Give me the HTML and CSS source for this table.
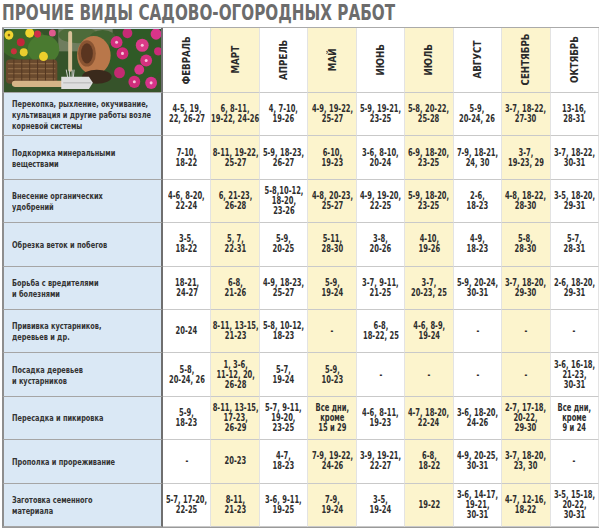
FILE: index.html
```html
<!DOCTYPE html>
<html lang="ru">
<head>
<meta charset="utf-8">
<title>Прочие виды садово-огородных работ</title>
<link rel="stylesheet" href="styles.css">
</head>
<body>
<h1 class="title"><span>ПРОЧИЕ ВИДЫ САДОВО-ОГОРОДНЫХ РАБОТ</span></h1>
<div class="grid">
  <div class="pic">
    <svg viewBox="0 0 159 62" preserveAspectRatio="none" width="100%" height="100%">
      <rect width="159" height="62" fill="#36532a"/>
      <rect x="55" y="0" width="55" height="22" fill="#6f7d5e"/>
      <ellipse cx="75" cy="6" rx="20" ry="8" fill="#4e6b3a"/>
      <ellipse cx="100" cy="10" rx="14" ry="9" fill="#3f6230"/>
      <ellipse cx="20" cy="14" rx="24" ry="16" fill="#3e6a2a"/>
      <ellipse cx="40" cy="20" rx="16" ry="14" fill="#4a7a30"/>
      <ellipse cx="135" cy="25" rx="30" ry="28" fill="#2f5a26"/>
      <rect x="2" y="30" width="52" height="24" rx="4" fill="#6a4a2e"/>
      <path d="M4 34h48M4 39h48M4 44h48M4 49h48" stroke="#8c6844" stroke-width="1.2"/>
      <path d="M10 30v24M18 30v24M26 30v24M34 30v24M42 30v24M50 30v24" stroke="#543823" stroke-width="1"/>
      <circle cx="5" cy="6" r="4.5" fill="#f1d431"/>
      <circle cx="5" cy="6" r="1.3" fill="#8a6a10"/>
      <circle cx="26" cy="4" r="4.5" fill="#f3d62e"/>
      <circle cx="40" cy="27" r="4.5" fill="#ecd02c"/>
      <circle cx="20" cy="23" r="4" fill="#e9cd2e"/>
      <circle cx="17" cy="13" r="4" fill="#c3263a"/>
      <circle cx="34" cy="5" r="3.5" fill="#d02e48"/>
      <circle cx="49" cy="4" r="3.5" fill="#e05a8e"/>
      <circle cx="10" cy="22" r="3" fill="#c9303e"/>
      <rect x="65" y="2" width="4" height="40" rx="2" fill="#d9c29a"/>
      <path d="M63 40l2 10M66 40l1 10M69 40v10M71 40l-1 10" stroke="#cfcfcf" stroke-width="1"/>
      <ellipse cx="91" cy="26" rx="17" ry="19" fill="#b9774a"/>
      <ellipse cx="84" cy="24" rx="9" ry="13" fill="#8a5432"/>
      <ellipse cx="84" cy="24" rx="6" ry="10" fill="#5a3520"/>
      <ellipse cx="94" cy="47" rx="15" ry="7" fill="#3a2a1c"/>
      <rect x="8" y="51" width="54" height="6" rx="3" fill="#d5b487"/>
      <path d="M58 47h28l4 6-4 6h-28z" fill="#dedede"/>
      <path d="M60 53h28" stroke="#a9a9a9" stroke-width="0.8"/>
      <circle cx="114" cy="13" r="6" fill="#d42f7f"/>
      <circle cx="120" cy="24" r="6" fill="#cf2a78"/>
      <circle cx="140" cy="16" r="6.5" fill="#db3a88"/>
      <circle cx="154" cy="5" r="5.5" fill="#d8348a"/>
      <circle cx="125" cy="4" r="5" fill="#c82b75"/>
      <circle cx="144" cy="31" r="6" fill="#d3317f"/>
      <circle cx="117" cy="43" r="5.5" fill="#c42a72"/>
      <circle cx="137" cy="40" r="5" fill="#d9368a"/>
      <circle cx="132" cy="52" r="6" fill="#cf2d7b"/>
      <circle cx="149" cy="53" r="6" fill="#d6338a"/>
      <circle cx="156" cy="22" r="4" fill="#c92b78"/>
      <circle cx="114" cy="13" r="1.5" fill="#f5c7dc"/>
      <circle cx="120" cy="24" r="1.5" fill="#f5c7dc"/>
      <circle cx="140" cy="16" r="1.5" fill="#f5c7dc"/>
      <circle cx="144" cy="31" r="1.5" fill="#f5c7dc"/>
      <circle cx="132" cy="52" r="1.5" fill="#f5c7dc"/>
      <circle cx="149" cy="53" r="1.5" fill="#f5c7dc"/>
    </svg>
  </div>
  <div class="m"><span>ФЕВРАЛЬ</span></div>
  <div class="m y"><span>МАРТ</span></div>
  <div class="m"><span>АПРЕЛЬ</span></div>
  <div class="m y"><span>МАЙ</span></div>
  <div class="m"><span>ИЮНЬ</span></div>
  <div class="m y"><span>ИЮЛЬ</span></div>
  <div class="m"><span>АВГУСТ</span></div>
  <div class="m y"><span>СЕНТЯБРЬ</span></div>
  <div class="m"><span>ОКТЯБРЬ</span></div>

  <div class="lab"><span>Перекопка, рыхление, окучивание,<br>культивация и другие работы возле<br>корневой системы</span></div>
  <div class="c"><span>4-5, 19,<br>22, 26-27</span></div>
  <div class="c y"><span>6, 8-11,<br>19-22, 24-26</span></div>
  <div class="c"><span>4, 7-10,<br>19-26</span></div>
  <div class="c y"><span>4-9, 19-22,<br>25-27</span></div>
  <div class="c"><span>5-9, 19-21,<br>23-25</span></div>
  <div class="c y"><span>5-8, 20-22,<br>25-28</span></div>
  <div class="c"><span>5-9,<br>20-24, 26</span></div>
  <div class="c y"><span>3-7, 18-22,<br>27-30</span></div>
  <div class="c"><span>13-16,<br>28-31</span></div>

  <div class="lab"><span>Подкормка минеральными<br>веществами</span></div>
  <div class="c"><span>7-10,<br>18-22</span></div>
  <div class="c y"><span>8-11, 19-22,<br>25-27</span></div>
  <div class="c"><span>5-9, 18-23,<br>26-27</span></div>
  <div class="c y"><span>6-10,<br>19-23</span></div>
  <div class="c"><span>3-6, 8-10,<br>20-24</span></div>
  <div class="c y"><span>6-9, 18-20,<br>23-25</span></div>
  <div class="c"><span>7-9, 18-21,<br>24, 30</span></div>
  <div class="c y"><span>3-7,<br>19-23, 29</span></div>
  <div class="c"><span>3-7, 18-22,<br>30-31</span></div>

  <div class="lab"><span>Внесение органических<br>удобрений</span></div>
  <div class="c"><span>4-6, 8-20,<br>22-24</span></div>
  <div class="c y"><span>6, 21-23,<br>26-28</span></div>
  <div class="c"><span>5-8,10-12,<br>18-20,<br>23-26</span></div>
  <div class="c y"><span>4-8, 20-23,<br>25-27</span></div>
  <div class="c"><span>4-9, 19-20,<br>22-25</span></div>
  <div class="c y"><span>5-9, 18-20,<br>23-25</span></div>
  <div class="c"><span>2-6,<br>18-23</span></div>
  <div class="c y"><span>4-8, 18-22,<br>28-30</span></div>
  <div class="c"><span>3-5, 18-20,<br>29-31</span></div>

  <div class="lab"><span>Обрезка веток и побегов</span></div>
  <div class="c"><span>3-5,<br>18-22</span></div>
  <div class="c y"><span>5, 7,<br>22-31</span></div>
  <div class="c"><span>5-9,<br>20-25</span></div>
  <div class="c y"><span>5-11,<br>28-30</span></div>
  <div class="c"><span>3-8,<br>20-26</span></div>
  <div class="c y"><span>4-10,<br>19-26</span></div>
  <div class="c"><span>4-9,<br>18-23</span></div>
  <div class="c y"><span>5-8,<br>28-30</span></div>
  <div class="c"><span>5-7,<br>28-31</span></div>

  <div class="lab"><span>Борьба с вредителями<br>и болезнями</span></div>
  <div class="c"><span>18-21,<br>24-27</span></div>
  <div class="c y"><span>6-8,<br>21-26</span></div>
  <div class="c"><span>4-9, 18-23,<br>25-27</span></div>
  <div class="c y"><span>5-9,<br>19-24</span></div>
  <div class="c"><span>3-7, 9-11,<br>21-25</span></div>
  <div class="c y"><span>3-7,<br>20-23, 25</span></div>
  <div class="c"><span>5-9, 20-24,<br>30-31</span></div>
  <div class="c y"><span>3-7, 18-20,<br>29-30</span></div>
  <div class="c"><span>2-6, 18-20,<br>29-31</span></div>

  <div class="lab"><span>Прививка кустарников,<br>деревьев и др.</span></div>
  <div class="c"><span>20-24</span></div>
  <div class="c y"><span>8-11, 13-15,<br>21-23</span></div>
  <div class="c"><span>5-8, 10-12,<br>18-23</span></div>
  <div class="c y"><span>-</span></div>
  <div class="c"><span>6-8,<br>18-22, 25</span></div>
  <div class="c y"><span>4-6, 8-9,<br>19-24</span></div>
  <div class="c"><span>-</span></div>
  <div class="c y"><span>-</span></div>
  <div class="c"><span>-</span></div>

  <div class="lab"><span>Посадка деревьев<br>и кустарников</span></div>
  <div class="c"><span>5-8,<br>20-24, 26</span></div>
  <div class="c y"><span>1, 3-6,<br>11-12, 20,<br>26-28</span></div>
  <div class="c"><span>5-7,<br>19-24</span></div>
  <div class="c y"><span>5-9,<br>10-23</span></div>
  <div class="c"><span>-</span></div>
  <div class="c y"><span>-</span></div>
  <div class="c"><span>-</span></div>
  <div class="c y"><span>-</span></div>
  <div class="c"><span>3-6, 16-18,<br>21-23,<br>30-31</span></div>

  <div class="lab"><span>Пересадка и пикировка</span></div>
  <div class="c"><span>5-9,<br>18-23</span></div>
  <div class="c y"><span>8-11, 13-15,<br>17-23,<br>26-29</span></div>
  <div class="c"><span>5-7, 9-11,<br>19-20,<br>23-25</span></div>
  <div class="c y"><span>Все дни,<br>кроме<br>15 и 29</span></div>
  <div class="c"><span>4-6, 8-11,<br>19-23</span></div>
  <div class="c y"><span>4-7, 18-20,<br>22-24</span></div>
  <div class="c"><span>3-6, 18-20,<br>24-26</span></div>
  <div class="c y"><span>2-7, 17-18,<br>20-22,<br>29-30</span></div>
  <div class="c"><span>Все дни,<br>кроме<br>9 и 24</span></div>

  <div class="lab"><span>Прополка и прореживание</span></div>
  <div class="c"><span>-</span></div>
  <div class="c y"><span>20-23</span></div>
  <div class="c"><span>4-7,<br>18-23</span></div>
  <div class="c y"><span>7-9, 19-22,<br>24-26</span></div>
  <div class="c"><span>3-9, 19-21,<br>22-27</span></div>
  <div class="c y"><span>6-8,<br>18-22</span></div>
  <div class="c"><span>4-9, 20-25,<br>30-31</span></div>
  <div class="c y"><span>3-7, 18-20,<br>23, 30</span></div>
  <div class="c"><span>-</span></div>

  <div class="lab"><span>Заготовка семенного<br>материала</span></div>
  <div class="c"><span>5-7, 17-20,<br>22-25</span></div>
  <div class="c y"><span>8-11,<br>21-23</span></div>
  <div class="c"><span>3-6, 9-11,<br>19-25</span></div>
  <div class="c y"><span>7-9,<br>19-24</span></div>
  <div class="c"><span>3-5,<br>19-24</span></div>
  <div class="c y"><span>19-22</span></div>
  <div class="c"><span>3-6, 14-17,<br>19-21,<br>30-31</span></div>
  <div class="c y"><span>4-7, 12-16,<br>18-22</span></div>
  <div class="c"><span>3-5, 15-18,<br>20-22,<br>30-31</span></div>
</div>
</body>
</html>
```
FILE: styles.css
```css
* { box-sizing: border-box; }
html, body { margin: 0; padding: 0; background: #ffffff; }
body {
  font-family: "DejaVu Sans Condensed", "DejaVu Sans", sans-serif;
  color: #2e2e2e;
  width: 600px;
  overflow: hidden;
}
.title {
  margin: 0;
  height: 27px;
  padding: 2px 0 0 2px;
  font-size: 21px;
  line-height: 22px;
  font-weight: 700;
  color: #6c6c6c;
  white-space: nowrap;
}
.title span {
  display: inline-block;
  transform: scaleX(0.805);
  transform-origin: left center;
}
.grid {
  display: grid;
  grid-template-columns: 161px repeat(9, minmax(0, 1fr));
  grid-template-rows: 65px repeat(10, 43.4px);
  width: 597px;
  margin-left: 2px;
  border-top: 1px solid #aaaaaa;
  border-bottom: 1px solid #9a9a9a;
}
.pic {
  border-left: 2px solid #8e8e8e;
  border-right: 2px solid #6f6f6f;
  border-bottom: 1px solid #a5a5a5;
  padding: 1px 0 0 0;
  background: #dae8f5;
}
.pic svg { display: block; }
.m {
  display: flex;
  align-items: center;
  justify-content: center;
  border-right: 1px solid #e3e3e3;
  border-bottom: 1px solid #c9c9c9;
  min-width: 0;
}
.m span {
  writing-mode: vertical-rl;
  transform: rotate(180deg) scale(1, 0.88);
  font-size: 11px;
  font-weight: 700;
  color: #2a2a2a;
  white-space: nowrap;
}
.lab {
  display: flex;
  align-items: center;
  padding-left: 8px;
  background: #dae8f5;
  border-left: 2px solid #8e8e8e;
  border-right: 2px solid #6f6f6f;
  border-bottom: 1px solid #a5a5a5;
  font-size: 9.5px;
  line-height: 11px;
  font-weight: 700;
  color: #333333;
  white-space: nowrap;
  min-width: 0;
}
.lab span {
  display: inline-block;
  transform: scaleX(0.77);
  transform-origin: left center;
}
.c {
  display: flex;
  align-items: center;
  justify-content: center;
  text-align: center;
  border-right: 1px solid #e3e3e3;
  border-bottom: 1px solid #c9c9c9;
  font-size: 10px;
  line-height: 10px;
  font-weight: 700;
  color: #2e2e2e;
  white-space: nowrap;
  min-width: 0;
}
.c span {
  display: inline-block;
  flex: none;
  transform: scaleX(0.75);
  transform-origin: center center;
}
.y { background: #fcf4cd; }
```
